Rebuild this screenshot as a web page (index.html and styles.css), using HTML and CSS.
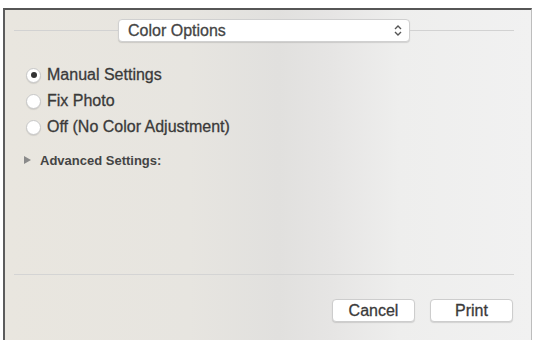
FILE: index.html
```html
<!DOCTYPE html>
<html lang="en">
  <head>
    <meta charset="UTF-8" />
    <link rel="stylesheet" href="styles.css">
  </head>
  <body>
    <div class="window">
      <div class="options">
        <div class="header">
          <div class="rule"></div>
          <div class="select">
            <span>Color Options</span>
            <svg width="8" height="13" viewBox="0 0 8 13">
              <path d="M1 5 L4 2 L7 5 M1 8 L4 11 L7 8" fill="none" stroke="#555" stroke-width="1.4" />
            </svg>
          </div>
          <div class="rule"></div>
        </div>

        <div class="radios">
          <label class="radio-row"><span class="radio checked"></span>Manual Settings</label>
          <label class="radio-row"><span class="radio"></span>Fix Photo</label>
          <label class="radio-row"><span class="radio"></span>Off (No Color Adjustment)</label>
        </div>

        <div class="advanced">
          <span class="triangle"></span>Advanced Settings:
        </div>
      </div>

      <div class="separator"></div>

      <div class="buttons">
        <button class="btn">Cancel</button>
        <button class="btn">Print</button>
      </div>
    </div>
  </body>
</html>
```

FILE: styles.css
```css
body {
  margin: 0;
  background: #fff;
  font-family: "Liberation Sans", Arial, sans-serif;
  color: #3a3a3a;
}
.window {
  margin: 8px 2px 0 3px;
  height: 332px;
  box-sizing: border-box;
  border-top: 2px solid #565656;
  border-left: 2px solid #5c5c5c;
  border-right: 1px solid #bdbdbd;
  display: flex;
  flex-direction: column;
  background: linear-gradient(to right, #e9e6df 0%, #e7e5e0 35%, #e1e0de 52%, #e6e5e4 62%, #eeeeed 75%, #f1f1f1 100%);
  -webkit-text-stroke: 0.3px currentColor;
}
.options {
  flex: 1;
}
.header {
  display: flex;
  align-items: center;
  padding: 9px 17px 0 9px;
}
.rule {
  flex: 1;
  height: 1px;
  background: #d2d2d2;
}
.select {
  width: 292px;
  height: 23px;
  box-sizing: border-box;
  display: flex;
  align-items: center;
  justify-content: space-between;
  padding: 0 7px 0 9px;
  background: #fff;
  border: 1px solid #d0d0d0;
  border-radius: 4px;
  box-shadow: 0 1px 1px rgba(0, 0, 0, 0.12);
  font-size: 16px;
  color: #454545;
}
.radios {
  margin-top: 20px;
  padding-left: 21px;
}
.radio-row {
  display: flex;
  align-items: center;
  height: 26px;
  font-size: 16px;
}
.radio {
  width: 15px;
  height: 15px;
  box-sizing: border-box;
  margin-right: 6px;
  border: 1px solid #c8c8c8;
  border-radius: 50%;
  background: #fff;
  box-shadow: 0 1px 1px rgba(0, 0, 0, 0.1);
  display: flex;
  align-items: center;
  justify-content: center;
}
.radio.checked::after {
  content: "";
  width: 6px;
  height: 6px;
  border-radius: 50%;
  background: #333;
}
.advanced {
  display: flex;
  align-items: center;
  height: 16px;
  margin-top: 12px;
  padding-left: 19px;
  font-size: 13px;
  font-weight: bold;
  color: #444;
  -webkit-text-stroke: 0;
}
.triangle {
  width: 0;
  height: 0;
  border-top: 4px solid transparent;
  border-bottom: 4px solid transparent;
  border-left: 7px solid #8a8a8a;
  margin-right: 9px;
}
.separator {
  height: 1px;
  margin: 0 17px 0 9px;
  background: #d4d4d4;
}
.buttons {
  display: flex;
  justify-content: flex-end;
  gap: 15px;
  padding: 24px 18px 18px;
}
.btn {
  width: 83px;
  height: 23px;
  padding: 0;
  background: #fff;
  border: 1px solid #cdcdcd;
  border-radius: 4px;
  box-shadow: 0 1px 1px rgba(0, 0, 0, 0.12);
  font-family: "Liberation Sans", Arial, sans-serif;
  font-size: 16px;
  color: #3a3a3a;
  -webkit-text-stroke: 0.3px currentColor;
}
```
